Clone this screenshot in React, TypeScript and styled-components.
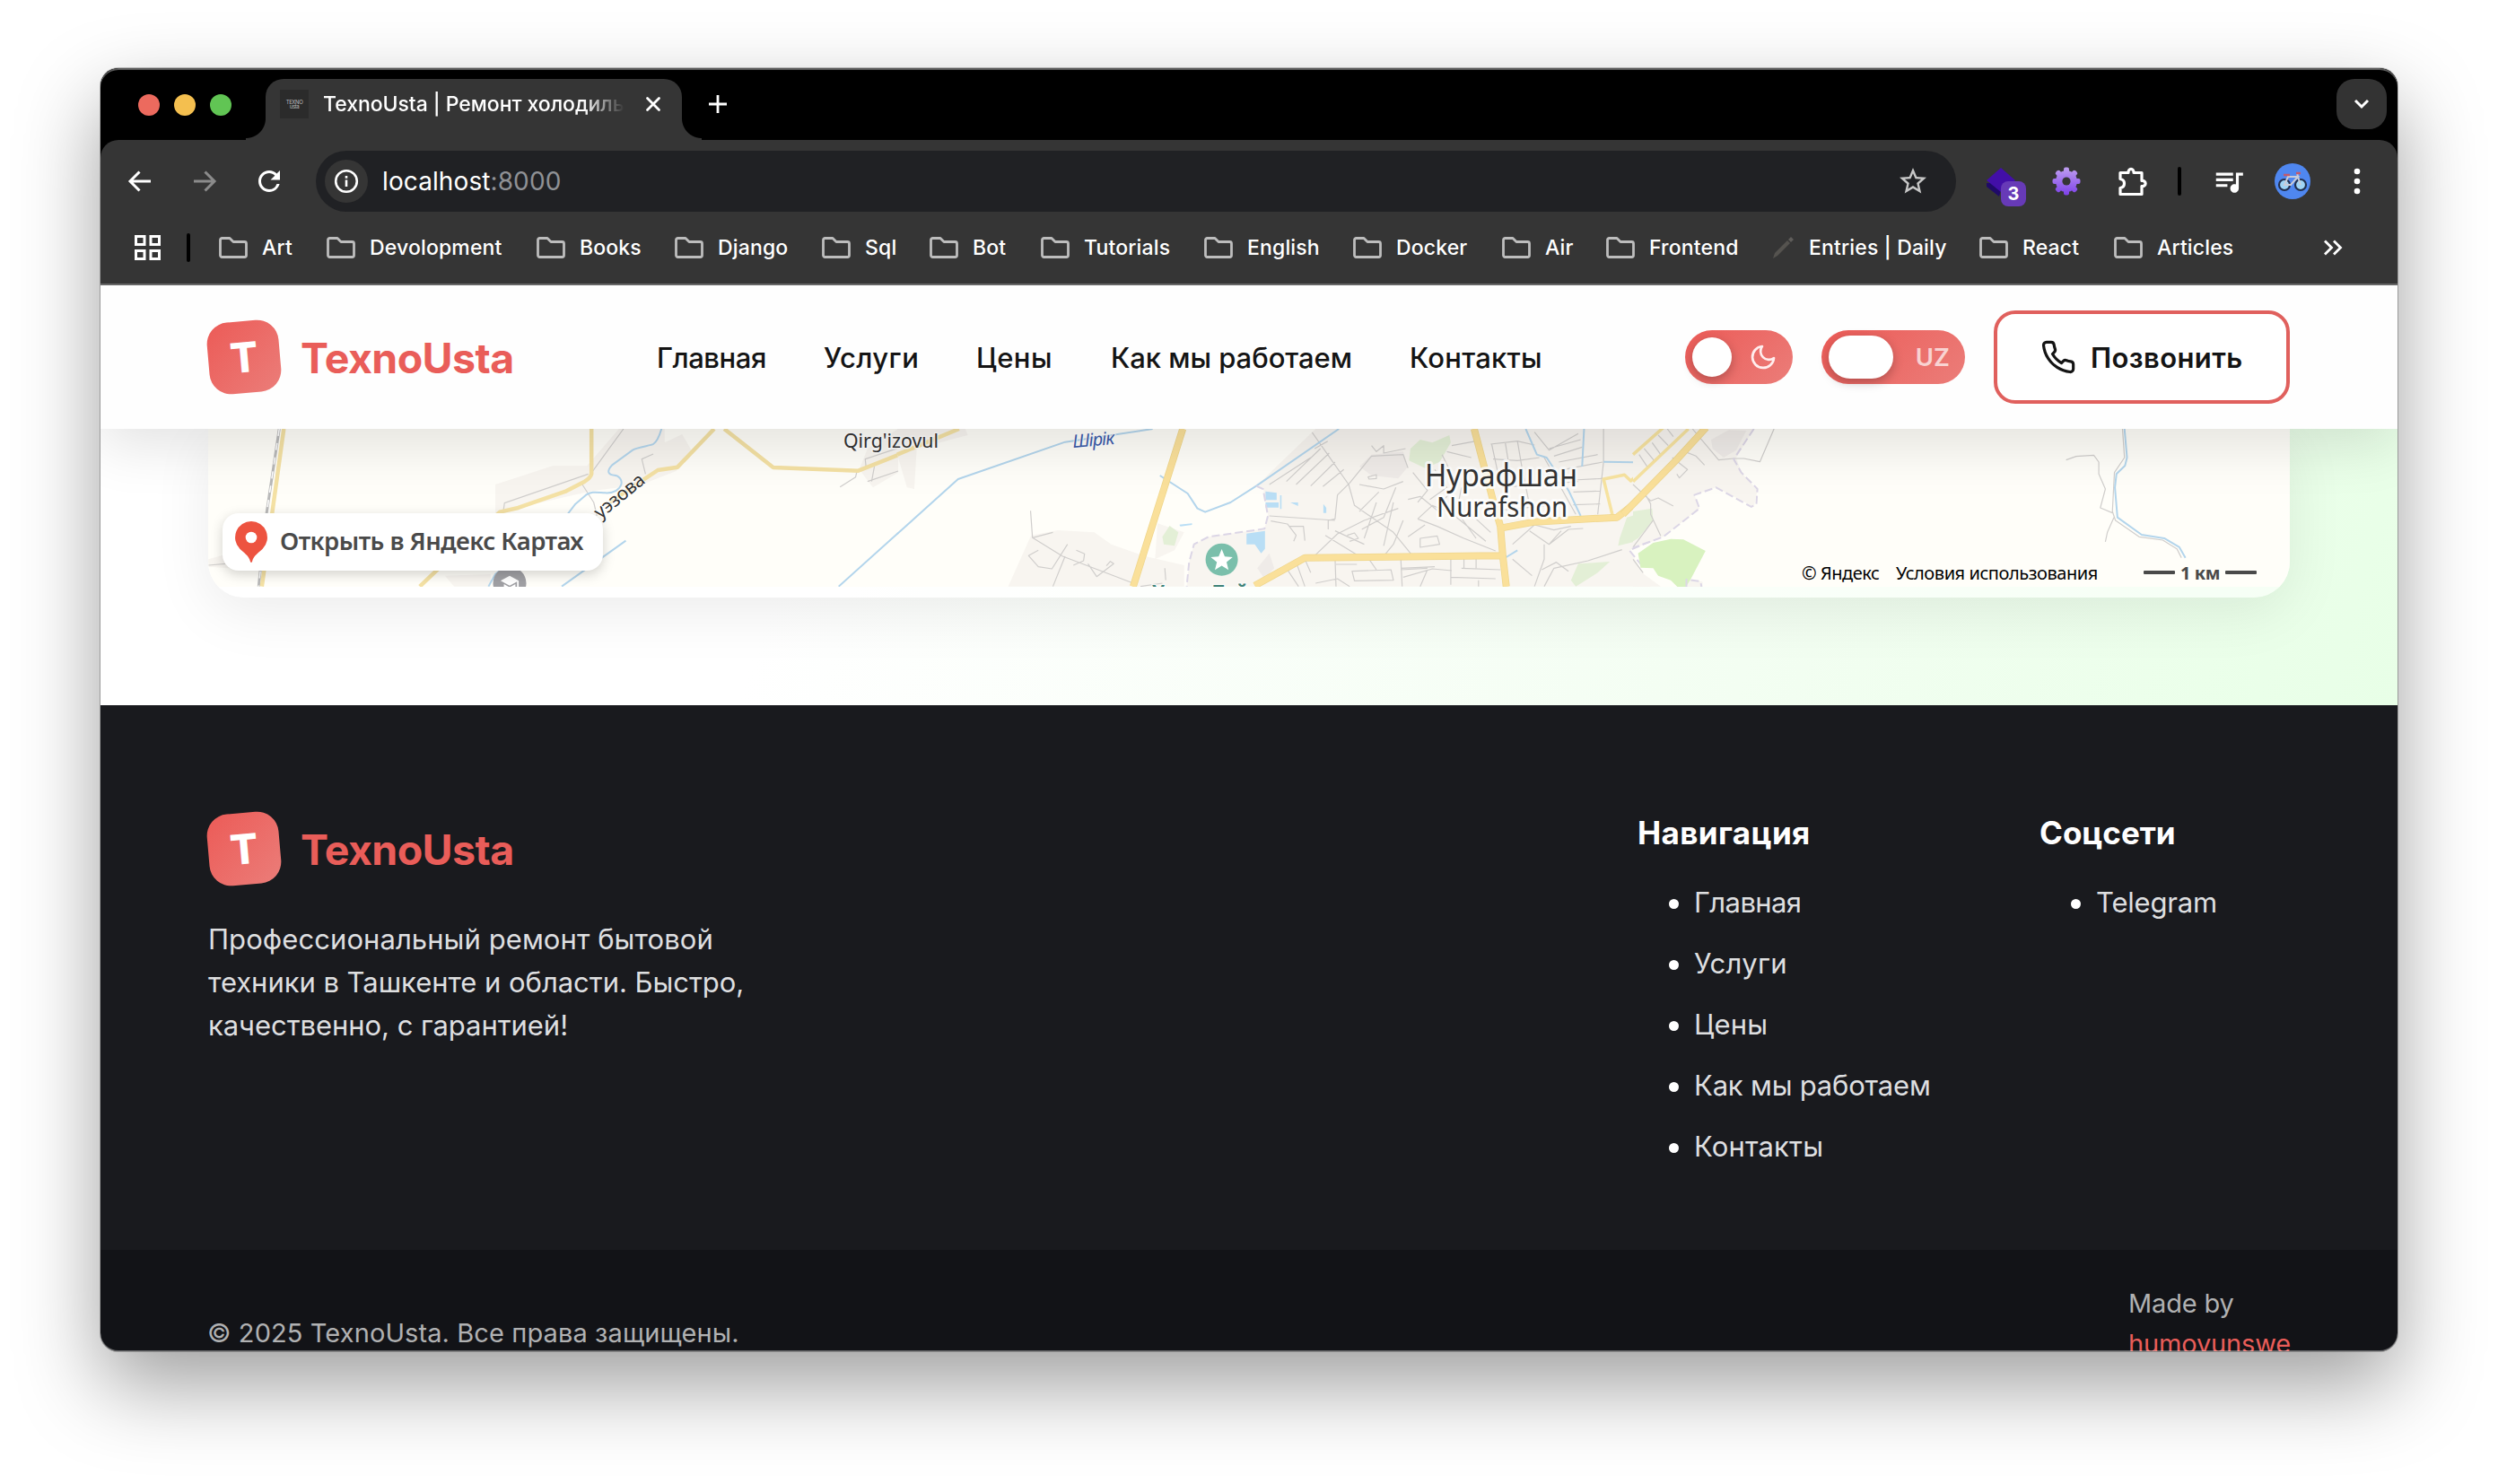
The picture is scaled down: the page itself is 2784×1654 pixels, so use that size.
import React from "react";
import styled, { createGlobalStyle } from "styled-components";
import { MdQueueMusic, MdStarBorder, MdRefresh, MdSchool } from "react-icons/md";

const GlobalStyle = createGlobalStyle`
  * { box-sizing: border-box; }
  html, body { margin: 0; padding: 0; background: #fff; }
  body { font-family: Inter, Roboto, "Liberation Sans", sans-serif; -webkit-font-smoothing: antialiased; }
  svg { display: block; flex: none; }
`;

const coral = "#e95d59";
const coralGradient = "linear-gradient(135deg, #ec5b57 0%, #eb7d79 100%)";
const chromeGrey = "#353535";

const Desktop = styled.div`
  width: 2784px;
  height: 1654px;
  padding: 76px 112px 0;
  overflow: hidden;
  background: #fff;
`;

const BrowserWindow = styled.div`
  position: relative;
  width: 2560px;
  height: 1430px;
  display: flex;
  flex-direction: column;
  border-radius: 20px;
  overflow: hidden;
  background: #000;
`;

const WindowShadow = styled.div`
  width: 2560px;
  border-radius: 20px;
  box-shadow: 0 0 0 1px rgba(0, 0, 0, 0.25), 0 38px 92px rgba(0, 0, 0, 0.38);
`;

const WindowEdge = styled.div`
  position: absolute;
  inset: 0;
  border-radius: 20px;
  pointer-events: none;
  z-index: 10;
  box-shadow: inset 0 2px 0 rgba(255, 255, 255, 0.35), inset 0 -1px 0 rgba(255, 255, 255, 0.35);
`;

/* ---------- Tab strip ---------- */

const TabStrip = styled.div`
  height: 80px;
  flex: none;
  display: flex;
  align-items: flex-end;
  padding: 0 12px 0 42px;
  background: #000;
`;

const TrafficLights = styled.div`
  display: flex;
  gap: 16px;
  height: 68px;
  padding-top: 17px;
  margin-right: 38px;
`;

const Light = styled.span<{ $color: string }>`
  width: 24px;
  height: 24px;
  border-radius: 50%;
  background: ${(p) => p.$color};
`;

const Tab = styled.div`
  position: relative;
  width: 464px;
  height: 68px;
  display: flex;
  align-items: center;
  padding: 0 23px 12px 16px;
  border-radius: 20px 20px 0 0;
  background: ${chromeGrey};
  &::before,
  &::after {
    content: "";
    position: absolute;
    bottom: 0;
    width: 22px;
    height: 24px;
  }
  &::before {
    left: -22px;
    background: radial-gradient(circle at 0 0, transparent 21.5px, ${chromeGrey} 22.5px);
  }
  &::after {
    right: -22px;
    background: radial-gradient(circle at 100% 0, transparent 21.5px, ${chromeGrey} 22.5px);
  }
`;

const Favicon = styled.div`
  width: 32px;
  height: 32px;
  display: flex;
  flex-direction: column;
  align-items: center;
  justify-content: center;
  background: #2b2b2b;
  color: #bdbdbd;
  font-size: 6px;
  line-height: 5px;
  letter-spacing: -0.4px;
  flex: none;
`;

const TabTitle = styled.div`
  width: 337px;
  margin-left: 16px;
  overflow: hidden;
  white-space: nowrap;
  color: #fff;
  font-size: 23px;
  line-height: 32px;
  font-weight: 500;
  letter-spacing: -0.05px;
  mask-image: linear-gradient(90deg, #000 290px, transparent 336px);
`;

const TabClose = styled.div`
  margin-left: auto;
`;

const NewTab = styled.div`
  height: 68px;
  padding: 17px 0 0 29px;
`;

const TabSearch = styled.div`
  width: 56px;
  height: 56px;
  margin: 0 0 12px auto;
  display: flex;
  align-items: center;
  justify-content: center;
  border-radius: 20px;
  background: #333;
`;

/* ---------- Toolbar ---------- */

const Toolbar = styled.div`
  height: 92px;
  flex: none;
  display: flex;
  align-items: center;
  padding: 0 39px 0 30px;
  border-radius: 20px 20px 0 0;
  background: ${chromeGrey};
`;

const NavButtons = styled.div`
  width: 210px;
  display: flex;
  gap: 44px;
  align-items: center;
  svg:last-child { margin-left: -4px; }
`;

const Omnibox = styled.div`
  width: 1828px;
  height: 68px;
  display: flex;
  align-items: center;
  padding: 0 30px 0 10px;
  border-radius: 34px;
  background: #202124;
`;

const SiteInfo = styled.div`
  width: 48px;
  height: 48px;
  display: flex;
  align-items: center;
  justify-content: center;
  border-radius: 50%;
  background: #353535;
`;

const Address = styled.div`
  margin: 0 auto 0 16px;
  color: #fff;
  font-size: 28px;
  letter-spacing: 0.1px;
  span { color: #8f9195; }
`;

const ExtensionSlot = styled.div`
  position: relative;
  margin-left: 34px;
  width: 46px;
  height: 48px;
`;

const Badge = styled.span`
  position: absolute;
  left: 16px;
  top: 24px;
  width: 28px;
  height: 28px;
  border-radius: 8px;
  background: #673ab7;
  color: #fff;
  font-size: 20px;
  line-height: 28px;
  font-weight: 700;
  text-align: center;
`;

const ToolbarIcons = styled.div`
  flex: 1;
  display: flex;
  align-items: center;
`;

const Gap = styled.span<{ $w: number }>`
  width: ${(p) => p.$w}px;
  flex: none;
`;

const Divider = styled.span`
  width: 4px;
  height: 32px;
  flex: none;
  border-radius: 2px;
  background: #000;
`;

const Avatar = styled.div`
  width: 40px;
  height: 40px;
  display: flex;
  align-items: center;
  justify-content: center;
  border-radius: 50%;
  background: #4f87f0;
`;

/* ---------- Bookmarks ---------- */

const BookmarkBar = styled.div`
  height: 70px;
  flex: none;
  display: flex;
  align-items: center;
  padding: 0 60px 12px 38px;
  border-bottom: 2px solid #666;
  background: ${chromeGrey};
`;

const Bookmark = styled.div<{ $w: number }>`
  width: ${(p) => p.$w}px;
  flex: none;
  display: flex;
  align-items: center;
  gap: 16px;
  color: #fff;
  font-size: 23px;
  line-height: 32px;
  font-weight: 500;
  letter-spacing: 0.15px;
  white-space: nowrap;
`;

/* ---------- Site header ---------- */

const Viewport = styled.div`
  flex: 1;
  min-height: 0;
  display: flex;
  flex-direction: column;
  overflow: hidden;
  background: #fff;
`;

const Header = styled.header`
  position: relative;
  z-index: 2;
  height: 160px;
  flex: none;
  display: flex;
  align-items: center;
  padding: 0 120px;
  background: #fefefe;
  box-shadow: 0 16px 64px rgba(0, 0, 0, 0.12);
`;

const Brand = styled.div`
  display: flex;
  align-items: center;
  gap: 23px;
`;

const BrandMark = styled.div`
  width: 80px;
  height: 80px;
  display: flex;
  align-items: center;
  justify-content: center;
  border-radius: 24px;
  transform: rotate(-5deg);
  background: ${coralGradient};
  color: #fff;
  font-size: 46px;
  font-weight: 800;
`;

const BrandName = styled.div`
  width: 237px;
  padding-top: 2px;
  color: ${coral};
  font-size: 46.5px;
  font-weight: 700;
  letter-spacing: -0.6px;
  white-space: nowrap;
`;

const Menu = styled.nav`
  display: flex;
  gap: 64px;
  margin-left: 160px;
`;

const MenuLink = styled.a<{ $w: number; $track: number }>`
  width: ${(p) => p.$w}px;
  color: #141414;
  font-size: 31px;
  font-weight: 500;
  letter-spacing: ${(p) => p.$track}px;
  white-space: nowrap;
`;

const Actions = styled.div`
  margin-left: auto;
  display: flex;
  align-items: center;
  gap: 32px;
`;

const Toggle = styled.div<{ $w: number }>`
  width: ${(p) => p.$w}px;
  height: 60px;
  display: flex;
  align-items: center;
  justify-content: space-between;
  padding: 0 17px 0 8px;
  border-radius: 30px;
  background: ${coralGradient};
  color: rgba(255, 255, 255, 0.7);
  font-size: 27.5px;
  font-weight: 600;
`;

const Knob = styled.span<{ $w: number; $h: number }>`
  width: ${(p) => p.$w}px;
  height: ${(p) => p.$h}px;
  border-radius: 24px;
  background: #fff;
  box-shadow: 0 4px 12px rgba(0, 0, 0, 0.25);
`;

const CallButton = styled.button`
  width: 330px;
  height: 104px;
  display: flex;
  align-items: center;
  gap: 16px;
  padding: 0 48px;
  border: 4px solid #e0605d;
  border-radius: 24px;
  background: #fff;
  color: #141414;
  font: 600 31px Inter, sans-serif;
  letter-spacing: 0.4px;
  white-space: nowrap;
`;

/* ---------- Map section ---------- */

const MapSection = styled.section`
  height: 308px;
  flex: none;
  padding: 0 120px;
  background: linear-gradient(105deg, #fff 30%, #f3fef2 72%, #eaffe9 94%, #e8ffe7 100%);
`;

const MapCard = styled.div`
  position: relative;
  height: 188px;
  overflow: hidden;
  border-radius: 0 0 40px 40px;
  background: rgba(255, 255, 255, 0.55);
`;

const MapCardShadow = styled.div`
  border-radius: 0 0 40px 40px;
  box-shadow: 0 16px 64px rgba(0, 0, 0, 0.08);
`;

const OpenInMaps = styled.a`
  position: absolute;
  left: 16px;
  top: 94px;
  width: 424px;
  height: 64px;
  display: flex;
  align-items: center;
  gap: 14px;
  padding-left: 14px;
  border-radius: 18px;
  background: #fff;
  box-shadow: 0 4px 14px rgba(0, 0, 0, 0.18);
  color: #4a4a4a;
  font-family: "Noto Sans", sans-serif;
  font-size: 27.5px;
  line-height: 32px;
  font-weight: 600;
  letter-spacing: -0.55px;
  white-space: nowrap;
  span { margin-top: -3px; }
`;

const Credits = styled.div`
  position: absolute;
  right: 0;
  bottom: 12px;
  height: 32px;
  display: flex;
  align-items: center;
  padding: 0 37px 0 12px;
  font-family: "Noto Sans", sans-serif;
  font-size: 20px;
  letter-spacing: -0.45px;
  color: #000;
  white-space: nowrap;
`;

const CreditText = styled.span<{ $w: number }>`
  width: ${(p) => p.$w}px;
`;

const ScaleBar = styled.span`
  width: 35px;
  height: 4px;
  border-radius: 1px;
  background: #4a4a4a;
`;

const ScaleLabel = styled.span`
  width: 56px;
  text-align: center;
  color: #4a4a4a;
  font-weight: 700;
`;

/* ---------- Footer ---------- */

const Footer = styled.footer`
  height: 607px;
  flex: none;
  display: flex;
  padding: 120px 120px 0;
  background: #191a1e;
`;

const FooterAbout = styled.div`
  width: 1593px;
`;

const FooterText = styled.p`
  width: 640px;
  margin: 37px 0 0;
  color: #dedfe0;
  font-size: 31px;
  line-height: 48px;
`;

const FooterLine = styled.span<{ $track: number }>`
  display: block;
  letter-spacing: ${(p) => p.$track}px;
`;

const FooterColumn = styled.div<{ $w: number }>`
  width: ${(p) => p.$w}px;
`;

const FooterTitle = styled.h4<{ $track: number }>`
  margin: 0 0 32px;
  color: #fff;
  font-size: 35px;
  line-height: 44px;
  font-weight: 700;
  letter-spacing: ${(p) => p.$track}px;
`;

const FooterList = styled.ul`
  display: flex;
  flex-direction: column;
  gap: 20px;
  margin: 0;
  padding: 0 0 0 35px;
  list-style: none;
`;

const FooterItem = styled.li<{ $track: number }>`
  display: flex;
  align-items: center;
  gap: 17px;
  color: #dedfe0;
  font-size: 31px;
  line-height: 48px;
  letter-spacing: ${(p) => p.$track}px;
  white-space: nowrap;
  &::before {
    content: "";
    width: 11px;
    height: 11px;
    margin-top: 2px;
    border-radius: 50%;
    background: #fff;
  }
`;

const LegalBar = styled.div`
  flex: 1;
  display: flex;
  justify-content: space-between;
  align-items: flex-start;
  padding: 37px 120px 0 119px;
  background: #121317;
  color: #b0b1b2;
  font-size: 29px;
  line-height: 45px;
  white-space: nowrap;
`;

const Copyright = styled.div`
  padding-top: 33px;
  letter-spacing: 0.1px;
`;

const Author = styled.div`
  width: 180px;
  letter-spacing: -0.15px;
  a { display: block; color: ${coral}; }
`;

/* ---------- Drawings ---------- */

const lineIcon = { fill: "none", stroke: "#fff", strokeLinecap: "round", strokeLinejoin: "round" } as const;

const ArrowIcon = ({ forward }: { forward?: boolean }) => (
  <svg width="28" height="28" viewBox="0 0 28 28" {...lineIcon} stroke={forward ? "#8b8b8b" : "#fff"} strokeWidth="3" strokeLinecap="butt" strokeLinejoin="miter">
    {forward ? <path d="M2 14H25M14.500 3.500L25 14L14.500 24.500" /> : <path d="M26 14H3M13.500 3.500L3 14L13.500 24.500" />}
  </svg>
);

const FolderIcon = () => (
  <svg width="32" height="24" viewBox="0 0 32 24" fill="none" stroke="#bdbdbd" strokeWidth="2.800" strokeLinejoin="round">
    <path d="M1.500 3.500a2 2 0 0 1 2-2H12l4 4h12.500a2 2 0 0 1 2 2v13a2 2 0 0 1-2 2h-25a2 2 0 0 1-2-2z" />
  </svg>
);

const PencilIcon = () => (
  <svg width="26" height="28" viewBox="0 0 26 28">
    <path d="M2 26l2-6L18 6l3 3L7 23z" fill="#55534f" />
    <path d="M19 5l3-3 3 3-3 3z" fill="#5f5d5a" />
  </svg>
);

const AppsIcon = () => (
  <svg width="29" height="28" viewBox="0 0 29 28" fill="none" stroke="#fff" strokeWidth="3">
    <path d="M1.500 1.500h9.500v9h-9.500zM18 1.500h9.500v9h-9.500zM1.500 17.500h9.500v9h-9.500zM18 17.500h9.500v9h-9.500z" />
  </svg>
);

const PuzzleIcon = () => (
  <svg width="34" height="34" viewBox="0 0 34 34" fill="none" stroke="#fff" strokeWidth="3.200" strokeLinejoin="round">
    <path d="M3 7.500h9c-.5-5.500 6.500-5.500 6 0h9v9c5.500-.5 5.500 6.500 0 6v9h-24v-7c6-1 6-9 0-10z" />
  </svg>
);

const LayersIcon = () => (
  <svg width="46" height="48" viewBox="0 0 46 48">
    <path d="M0 26v4l14 11 4-15z" fill="#1f0a68" />
    <path d="M16 9L32 23 16 36 0 23z" fill="#420fa8" />
  </svg>
);

const teeth = [0, 45, 90, 135, 180, 225, 270, 315];

const GearIcon = () => (
  <svg width="32" height="32" viewBox="0 0 32 32">
    <defs>
      <linearGradient id="gear" gradientUnits="userSpaceOnUse" x1="0" y1="0" x2="0" y2="32">
        <stop offset="0" stopColor="#c0a0f0" />
        <stop offset="1" stopColor="#7c3fe8" />
      </linearGradient>
      <mask id="gearShape">
        <g fill="#fff">
          <circle cx="16" cy="16" r="12" />
          {teeth.map((a) => (
            <rect key={a} x="13" y="0.500" width="6" height="8" rx="2" transform={`rotate(${a} 16 16)`} />
          ))}
        </g>
        <circle cx="16" cy="16" r="4.600" fill="#000" />
      </mask>
    </defs>
    <rect width="32" height="32" fill="url(#gear)" mask="url(#gearShape)" />
  </svg>
);

const Bicycle = () => (
  <svg width="34" height="26" viewBox="0 0 34 26" fill="none">
    <circle cx="8" cy="17" r="6" fill="#9fd4f5" stroke="#22304f" strokeWidth="2.200" />
    <circle cx="26" cy="17" r="6" fill="#9fd4f5" stroke="#22304f" strokeWidth="2.200" />
    <path d="M8 17l4-9h11l-8 9zM23 8l3 9M22 3l1 5" stroke="#c9ccd8" strokeWidth="2" />
    <path d="M7 6h7M21 4h5" stroke="#c25a6b" strokeWidth="2.400" />
  </svg>
);

const PhoneIcon = () => (
  <svg width="40" height="40" viewBox="0 0 24 24" {...lineIcon} stroke="#141414" strokeWidth="1.900">
    <path d="M22 16.920v3a2 2 0 0 1-2.180 2 19.790 19.790 0 0 1-8.630-3.070 19.500 19.500 0 0 1-6-6 19.790 19.790 0 0 1-3.070-8.670A2 2 0 0 1 4.110 2h3a2 2 0 0 1 2 1.720 12.840 12.840 0 0 0 .7 2.810 2 2 0 0 1-.45 2.110L8.090 9.910a16 16 0 0 0 6 6l1.270-1.270a2 2 0 0 1 2.110-.45 12.840 12.840 0 0 0 2.810.7A2 2 0 0 1 22 16.920z" />
  </svg>
);

const MoonIcon = () => (
  <svg width="32" height="32" viewBox="0 0 24 24" {...lineIcon} stroke="#ffeeee" strokeWidth="2">
    <path d="M21 12.790A9 9 0 1 1 11.210 3 7 7 0 0 0 21 12.790z" />
  </svg>
);

const PinIcon = () => (
  <svg width="36" height="46" viewBox="0 0 36 46">
    <path d="M18 0a18 18 0 0 0-12.700 30.700C9.500 35 15.500 38 17 45q1 2 2 0c1.500-7 7.500-10 11.700-14.300A18 18 0 0 0 18 0z" fill="#ed5340" />
    <circle cx="18" cy="18" r="6.300" fill="#fff" />
  </svg>
);

/* Map layers; each district is surveyed in its own stretched grid. */
const west = "translate(200 460) scale(.5102 .3333)";
const centre = "translate(1000 460) scale(.5421 .3333)";
const east = "translate(1820 310) scale(.5612 .3333)";

const District = styled.g`
  fill: none;
  stroke-linejoin: round;
  path { vector-effect: non-scaling-stroke; }
  .area { fill: #f8f5f0; }
  .shade { fill: #efebe8; }
  .park { fill: #e3efd6; }
  .lawn { fill: #d8f2bf; }
  .lake { fill: #b9def5; }
  .lane { stroke: #d0cecc; stroke-width: 1.2; }
  .edge { stroke: #dcd6e6; stroke-width: 2; stroke-dasharray: 9 4; }
  .river { stroke: #b3d5ec; stroke-width: 2; }
  .road { stroke: #f4e1a4; stroke-width: 4.5; }
  .road2 { stroke: #f7e3a0; stroke-width: 3.5; }
  .highway { stroke: #efd68c; stroke-width: 8; }
  .highwayTop { stroke: #fae09a; stroke-width: 6.5; }
`;

const highways = "M587 54L552 235L485 581M735 578L838 485L1240 478M1186 54L1226 300L1240 380L1245 480L1252 581M1243 385L1310 365L1480 350L1570 235";

const CityMap = () => (
  <svg width="2320" height="176" viewBox="232 478 2320 176">
    <rect x="232" y="478" width="2320" height="176" fill="#fffef9" />
    <District transform={west}>
      <path className="area" d="M690 240L815 178H890L960 54H1060V100L1098 72L1120 130L1085 195L1010 240L900 262L690 335ZM580 545L600 581H680V540ZM1485 190L1503 120L1570 54V200L1515 250ZM63 490L110 470V520L63 515Z" />
      <path className="lane" d="M970 54L898 205M708 325L710 302L893 205M880 240L905 300L912 345M1018 205L1010 155L1035 138M1480 195L1477 215L1443 248M1503 230L1570 195M1500 185L1498 155L1570 118M1518 180L1512 230M63 510L100 505" />
      <path className="river" d="M1053 54C1048 80 1040 100 1035 105S1000 115 990 125L945 175C930 200 940 208 950 209S968 225 965 240S950 270 930 268S900 262 888 275L865 305L845 345L690 540L675 581M975 428L835 581M1570 402L1440 581" />
      <path d="M218 54L190 340L173 581" stroke="#b9b9b9" strokeWidth="3" />
      <path d="M218 54L190 340L173 581" stroke="#fff" strokeWidth="1.500" strokeDasharray="8 8" />
      <path className="road" d="M228 54L203 330L180 581M900 54V205Q898 218 885 230L845 262L740 318L700 332L560 530L525 581M1168 54L1088 182L1045 192L1010 228L940 300M1190 54L1297 183L1483 194L1572 140" />
    </District>
    <District transform={centre}>
      <path className="area" d="M0 54H140L145 75L40 120L35 255L20 250L0 140ZM738 245L860 54H1570V420L1505 460L1535 540L1570 581H595L600 500L610 440L640 415L755 388L762 340L752 250ZM228 581L275 410L330 393L405 400L440 440L510 480L590 510V581ZM535 370L590 400L570 460L530 490Z" />
      <path className="shade" d="M950 180L975 140L1040 130L1050 180L1030 220L975 210ZM740 520L765 470L775 520L755 555Z" />
      <path className="park" d="M1055 120L1075 90L1100 100L1135 75L1138 100L1115 165L1085 185L1052 160ZM545 415L560 378L578 400L570 445L548 440ZM1485 420L1500 350L1570 315V380L1520 430L1482 445ZM1385 560L1400 505L1465 498L1440 535L1395 581Z" />
      <path className="lake" d="M757 263L780 268V292H757ZM757 300H784V317H757ZM787 276H790V322H787ZM808 300H824V312ZM718 404L756 395V455L748 470L735 440H718ZM876 305L882 318V335H876ZM580 374L606 370V375L582 380Z" />
      <path className="lane" d="M274 328L278 418L340 480L485 570M278 418L320 400M290 460L270 478L290 515L318 522L350 440M345 480L320 581M368 460L385 472L383 495L362 510M392 505L410 548L445 505L438 497L430 512M550 520L552 560M500 581L545 570" />
      <path className="lane" d="M853 66L928 240L940 310L1020 400L1060 480M800 230L870 120M765 240L850 150M820 240L888 135M850 245L900 165M875 247L918 190M885 95L858 120M975 110L985 130L1000 110V135L1045 120M1050 185L1040 140L975 145L930 235L905 275L900 355L886 360V390M765 345L900 360M768 362L802 372L820 410L815 430M805 380H835L838 428M860 475L905 405L960 360L1030 320M880 410L950 480M900 395L960 440M925 410L940 402L948 420L930 430M968 215L985 207V220L970 222ZM950 240L1000 255L1040 230M950 330L990 265M955 390L1000 350L1025 250M985 300L960 420M1000 445L1020 300M1050 290L1075 280L1120 340M1040 360L1020 440L1000 480M1070 355L1100 310L1130 330M1070 355L1110 380L1165 420L1230 462M1075 420L1110 412L1115 440L1075 450ZM1085 375L1050 415M1105 190L1130 250L1095 290M1060 200L1090 260L1070 300M1130 130L1180 150M1140 110L1190 95M1120 140L1150 240L1120 300M1160 250L1150 330L1190 420M1135 330L1210 430M1180 340L1220 400" />
      <path className="lane" d="M1220 105L1275 95L1310 108M1225 155L1275 160L1320 150M1222 105L1240 240M1250 100L1262 220M1275 95L1285 190L1300 310M1310 65L1340 125L1400 70M1340 120L1405 90M1350 145L1408 115M1360 165L1440 140M1370 190L1450 165M1452 54V165L1440 340M1390 225L1450 220M1390 265L1445 262M1390 308L1445 305M1330 150L1395 340M1240 250L1400 230M1245 325L1340 310M1265 440L1310 375L1350 392L1385 380M1300 395L1340 440L1365 395M1340 440L1380 390L1410 387M1330 440V490L1310 581M1490 458L1420 495L1350 520L1330 581M1265 490L1305 545M1325 525L1355 500L1380 530" />
      <path className="lane" d="M838 490L850 535M820 500L838 581M800 520L825 581M900 485L902 581M902 507H945M935 530L1015 525L1020 560L940 562ZM1035 480L1038 581M1035 525L1090 520M1035 520L1105 515M1040 550L1100 522L1140 528M1090 525L1075 581M1138 475V575M1138 550L1230 555M1160 520L1240 525M1165 480V520M1190 480V520M1195 560V581M860 570L905 555L930 581M970 490L985 525" />
      <path className="river" d="M0 405L125 222L345 98L525 54M540 210L597 270L617 320L633 332L685 300L738 245L908 54M1292 54L1315 140L1335 150L1380 260L1405 345M1412 54L1408 180M1452 164L1515 166M1252 483L1275 460" />
      <path className="edge" d="M738 245L752 255L762 345L755 388L640 415L610 440L600 500L595 581M1570 415L1505 460L1535 520" />
      <path className="road" d="M0 140L127 54" />
      <path className="road2" d="M1570 138L1508 228L1495 208L1452 222L1470 340" />
      <path className="highway" d={highways} />
      <path className="highwayTop" d={highways} />
    </District>
    <District transform={east}>
      <path className="area" d="M0 504H240L205 600L215 650L247 710L240 765L165 700L122 725L132 770L60 865L0 900ZM0 940L35 1032H0ZM105 1005L138 1015V1032H105Z" />
      <path className="shade" d="M155 540L190 508L225 510L205 575L180 600L158 570Z" />
      <path className="park" d="M0 780L38 770L40 810L10 870L0 880Z" />
      <path className="lawn" d="M10 920L40 885L75 872L100 874L144 912L115 1005L105 1032H88L75 1010L50 995L40 970L15 968Z" />
      <path className="lane" d="M118 504L170 608L200 603L220 603L252 614L280 504M95 575L125 595L142 625M78 600L108 640L92 668L87 655M68 504L80 530M50 525L70 560M38 550L55 590M22 570L42 610M12 590L30 635M25 725L35 755V790L55 862M35 745L50 735L80 762M0 690L35 745M40 810L0 900M860 608L880 596L915 592L925 615V655L938 705L928 768L952 785M955 800L942 850L938 882M972 504L976 600L956 650L952 780L958 810L1005 865L1052 876L1080 905L1089 935M0 940L20 985" />
      <path className="edge" d="M240 504L200 605L215 650L247 705L245 755L235 765L165 700L122 725L132 770L60 865L0 902M106 1032V1008L134 1014L136 1032" />
      <path className="river" d="M976 504L981 600L977 627L960 655L957 700L962 800L1010 858L1055 870L1085 900L1097 935" />
      <path className="road2" d="M110 504L50 600L0 680M60 500L0 590" />
      <path className="highway" d="M145 500L85 610L-20 790" />
      <path className="highwayTop" d="M145 500L85 610L-20 790" />
    </District>
    <g fontFamily="Noto Sans, sans-serif" paintOrder="stroke" stroke="#fff" strokeOpacity=".85" strokeLinejoin="round" fill="#333">
      <text x="940" y="499" fontSize="21.500" strokeWidth="3" textLength="106" lengthAdjust="spacingAndGlyphs">Qirg'izovul</text>
      <text x="1196" y="499" fontSize="20" strokeWidth="2" fontStyle="italic" fill="#3b5ba9" textLength="47" transform="rotate(-5 1196 499)">Шірік</text>
      <text x="669" y="579" fontSize="21" strokeWidth="2" textLength="66" transform="rotate(-39 669 579)">уэзова</text>
      <text x="1588" y="542" fontSize="34" strokeWidth="6" textLength="170" lengthAdjust="spacingAndGlyphs">Нурафшан</text>
      <text x="1601" y="576" fontSize="30" strokeWidth="6" textLength="146" lengthAdjust="spacingAndGlyphs">Nurafshon</text>
      <text x="1284" y="667" fontSize="21.500" fontWeight="700" strokeWidth="2" fill="#3f8277">Узун</text>
      <text x="1352" y="667" fontSize="21.500" fontWeight="700" strokeWidth="2" fill="#3f8277">Той</text>
    </g>
    <circle cx="1361.600" cy="623.700" r="18" fill="#7abfab" />
    <path d="M1361.600 612l3.400 8.300 8.800.6-6.800 5.700 2.200 8.700-7.600-4.700-7.600 4.700 2.200-8.700-6.800-5.700 8.800-.6z" fill="#fff" />
    <circle cx="568" cy="650" r="18.500" fill="#a0a0a4" />
    <g transform="translate(557 639)">
      <MdSchool size={22} color="#fff" />
    </g>
  </svg>
);

/* ---------- Page ---------- */

const bookmarks: { label: string; w: number; pencil?: boolean }[] = [
  { label: "Art", w: 120 },
  { label: "Devolopment", w: 234 },
  { label: "Books", w: 154 },
  { label: "Django", w: 164 },
  { label: "Sql", w: 120 },
  { label: "Bot", w: 124 },
  { label: "Tutorials", w: 182 },
  { label: "English", w: 166 },
  { label: "Docker", w: 166 },
  { label: "Air", w: 116 },
  { label: "Frontend", w: 184 },
  { label: "Entries | Daily", w: 232, pencil: true },
  { label: "React", w: 150 },
  { label: "Articles", w: 200 },
];

const menu = [
  { label: "Главная", w: 122, track: -0.45, footTrack: -0.6 },
  { label: "Услуги", w: 106, track: 0.45, footTrack: 0.35 },
  { label: "Цены", w: 86, track: 0.4, footTrack: 0.2 },
  { label: "Как мы работаем", w: 269, track: -0.05, footTrack: -0.2 },
  { label: "Контакты", w: 148, track: 0.25, footTrack: 0.15 },
];

const Logo = () => (
  <Brand>
    <BrandMark>T</BrandMark>
    <BrandName>TexnoUsta</BrandName>
  </Brand>
);

export default function App() {
  return (
    <Desktop>
      <GlobalStyle />
      <WindowShadow>
        <BrowserWindow>
          <TabStrip>
            <TrafficLights>
              <Light $color="#ec6a5e" />
              <Light $color="#f4bf4f" />
              <Light $color="#61c554" />
            </TrafficLights>
            <Tab>
              <Favicon>
                <span>TEXNO</span>
                <span>usta</span>
              </Favicon>
              <TabTitle>TexnoUsta | Ремонт холодильников</TabTitle>
              <TabClose>
                <svg width="18" height="18" viewBox="0 0 18 18" {...lineIcon} strokeWidth="2.800">
                  <path d="M2.500 2.500L15.500 15.500M15.500 2.500L2.500 15.500" />
                </svg>
              </TabClose>
            </Tab>
            <NewTab>
              <svg width="22" height="22" viewBox="0 0 22 22" {...lineIcon} strokeWidth="2.800" strokeLinecap="butt">
                <path d="M11 1V21M1 11H21" />
              </svg>
            </NewTab>
            <TabSearch>
              <svg width="18" height="12" viewBox="0 0 18 12" {...lineIcon} strokeWidth="3" strokeLinecap="butt" strokeLinejoin="miter">
                <path d="M2 2L9 9L16 2" />
              </svg>
            </TabSearch>
          </TabStrip>

          <Toolbar>
            <NavButtons>
              <ArrowIcon />
              <ArrowIcon forward />
              <MdRefresh size={36} color="#fff" />
            </NavButtons>
            <Omnibox>
              <SiteInfo>
                <svg width="28" height="28" viewBox="0 0 28 28" fill="none" stroke="#fff" strokeWidth="2.600">
                  <circle cx="14" cy="14" r="11.800" />
                  <path d="M14 12.500V20M14 8V10.800" />
                </svg>
              </SiteInfo>
              <Address>
                localhost<span>:8000</span>
              </Address>
              <MdStarBorder size={36} color="#c7c7c7" />
            </Omnibox>
            <ToolbarIcons>
              <ExtensionSlot>
                <LayersIcon />
                <Badge>3</Badge>
              </ExtensionSlot>
              <Gap $w={27} />
              <GearIcon />
              <Gap $w={41} />
              <PuzzleIcon />
              <Gap $w={33} />
              <Divider />
              <Gap $w={34} />
              <MdQueueMusic size={38} color="#fff" />
              <Gap $w={32} />
              <Avatar>
                <Bicycle />
              </Avatar>
              <Gap $w={48} />
              <svg width="8" height="30" viewBox="0 0 8 30" fill="#fff">
                <circle cx="4" cy="4" r="3.300" />
                <circle cx="4" cy="15" r="3.300" />
                <circle cx="4" cy="26" r="3.300" />
              </svg>
            </ToolbarIcons>
          </Toolbar>

          <BookmarkBar>
            <AppsIcon />
            <Gap $w={29} />
            <Divider />
            <Gap $w={32} />
            {bookmarks.map((b) => (
              <Bookmark key={b.label} $w={b.w}>
                {b.pencil ? <PencilIcon /> : <FolderIcon />}
                {b.label}
              </Bookmark>
            ))}
            <Gap $w={32} />
            <svg width="24" height="18" viewBox="0 0 24 18" {...lineIcon} strokeWidth="2.800" strokeLinecap="butt" strokeLinejoin="miter">
              <path d="M3 1.500L10.500 9L3 16.500M13 1.500L20.500 9L13 16.500" />
            </svg>
          </BookmarkBar>

          <Viewport>
            <Header>
              <Logo />
              <Menu>
                {menu.map((m) => (
                  <MenuLink key={m.label} $w={m.w} $track={m.track}>
                    {m.label}
                  </MenuLink>
                ))}
              </Menu>
              <Actions>
                <Toggle $w={120}>
                  <Knob $w={44} $h={44} />
                  <MoonIcon />
                </Toggle>
                <Toggle $w={160}>
                  <Knob $w={72} $h={48} />
                  <span>UZ</span>
                </Toggle>
                <CallButton>
                  <PhoneIcon />
                  Позвонить
                </CallButton>
              </Actions>
            </Header>

            <MapSection>
              <MapCardShadow>
                <MapCard>
                  <CityMap />
                  <OpenInMaps>
                    <PinIcon />
                    <span>Открыть в Яндекс Картах</span>
                  </OpenInMaps>
                  <Credits>
                    <CreditText $w={105}>© Яндекс</CreditText>
                    <CreditText $w={276}>Условия использования</CreditText>
                    <ScaleBar />
                    <ScaleLabel>1 км</ScaleLabel>
                    <ScaleBar />
                  </Credits>
                </MapCard>
              </MapCardShadow>
            </MapSection>

            <Footer>
              <FooterAbout>
                <Logo />
                <FooterText>
                  <FooterLine $track={0.07}>Профессиональный ремонт бытовой</FooterLine>
                  <FooterLine $track={-0.04}>техники в Ташкенте и области. Быстро,</FooterLine>
                  <FooterLine $track={-0.05}>качественно, с гарантией!</FooterLine>
                </FooterText>
              </FooterAbout>
              <FooterColumn $w={448}>
                <FooterTitle $track={0.4}>Навигация</FooterTitle>
                <FooterList>
                  {menu.map((m) => (
                    <FooterItem key={m.label} $track={m.footTrack}>
                      {m.label}
                    </FooterItem>
                  ))}
                </FooterList>
              </FooterColumn>
              <FooterColumn $w={279}>
                <FooterTitle $track={0}>Соцсети</FooterTitle>
                <FooterList>
                  <FooterItem $track={-0.2}>Telegram</FooterItem>
                </FooterList>
              </FooterColumn>
            </Footer>

            <LegalBar>
              <Copyright>© 2025 TexnoUsta. Все права защищены.</Copyright>
              <Author>
                Made by <a>humoyunswe</a>
              </Author>
            </LegalBar>
          </Viewport>
          <WindowEdge />
        </BrowserWindow>
      </WindowShadow>
    </Desktop>
  );
}
